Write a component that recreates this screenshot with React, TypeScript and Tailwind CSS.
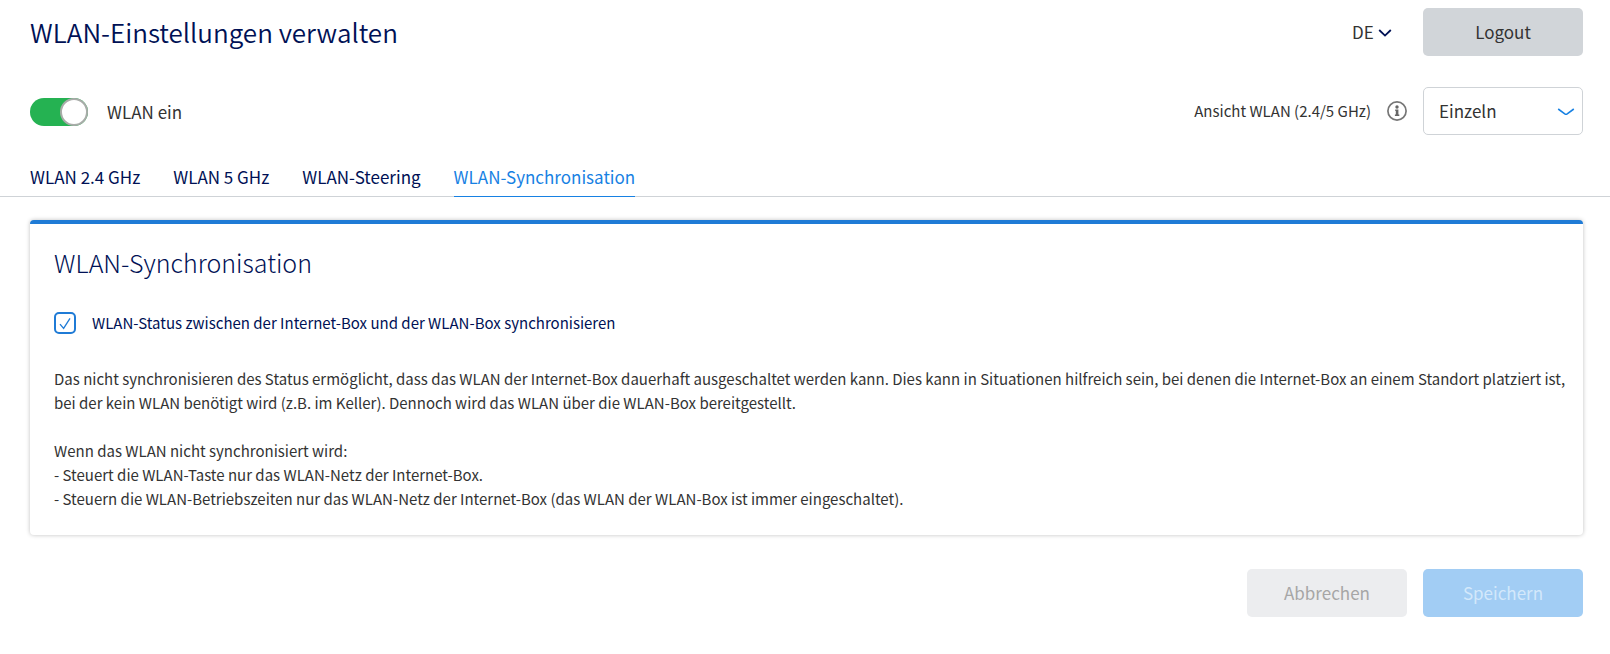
import { useState } from "react";

const tabs = ["WLAN 2.4 GHz", "WLAN 5 GHz", "WLAN-Steering", "WLAN-Synchronisation"];

function Chevron({ className }: { className: string }) {
  return (
    <svg viewBox="0 0 14 8" fill="none" stroke="currentColor" strokeWidth="1.8" className={className} aria-hidden="true">
      <path d="M1.2 1l5.8 5.6L12.8 1" />
    </svg>
  );
}

function InfoIcon() {
  return (
    <svg width="20" height="20" viewBox="0 0 20 20" fill="none" aria-hidden="true">
      <circle cx="10" cy="10" r="9.1" stroke="#767676" strokeWidth="1.7" />
      <circle cx="10" cy="6" r="1.7" fill="#666" />
      <path d="M8.2 8.6h3.2v5h.9v1.3H7.9v-1.3h.9V9.9h-.6z" fill="#666" />
    </svg>
  );
}

export default function App() {
  const [wlanOn, setWlanOn] = useState(true);
  const [active, setActive] = useState("WLAN-Synchronisation");
  const [sync, setSync] = useState(true);

  return (
    <main className="bg-white font-['Noto_Sans_CJK_SC','Noto_Sans',sans-serif] text-[#333333]">
      <header className="flex items-center justify-between pt-2 pr-[27px] pl-[30px]">
        <h1 className="text-[26px] leading-12 font-[350] text-[#001155]">WLAN-Einstellungen verwalten</h1>
        <div className="flex items-center gap-[31px]">
          <div className="relative">
            <select
              aria-label="Sprache"
              className="w-10 appearance-none bg-transparent text-[17px] leading-6 outline-none"
            >
              <option>DE</option>
              <option>FR</option>
              <option>IT</option>
              <option>EN</option>
            </select>
            <Chevron className="pointer-events-none absolute top-[9px] right-0 h-2 w-3.5 text-[#001155]" />
          </div>
          <button type="button" className="h-12 w-40 rounded-[5px] bg-[#d1d5d9] text-[17px] leading-6">
            Logout
          </button>
        </div>
      </header>

      <div className="mt-[31px] flex items-center justify-between pr-[27px] pl-[30px]">
        <label className="flex items-center gap-[19px] pt-0.5 text-[17px] leading-6">
          <span className="relative flex">
            <input
              type="checkbox"
              role="switch"
              checked={wlanOn}
              onChange={(e) => setWlanOn(e.target.checked)}
              className="peer h-7 w-[58px] appearance-none rounded-full bg-[#a0a0a0] checked:bg-[#25b252]"
            />
            <span className="pointer-events-none absolute top-0 left-0 size-7 rounded-full border-2 border-[#a9aca9] bg-white peer-checked:left-[30px]" />
          </span>
          WLAN ein
        </label>
        <div className="flex items-center gap-4">
          <label htmlFor="view" className="text-[15px] leading-6">
            Ansicht WLAN (2.4/5 GHz)
          </label>
          <button type="button" aria-label="Information">
            <InfoIcon />
          </button>
          <div className="relative">
            <select
              id="view"
              className="h-12 w-40 appearance-none rounded-[5px] border border-[#cfd3d7] bg-white pl-[15px] text-[17px] outline-none"
            >
              <option>Einzeln</option>
              <option>Kombiniert</option>
            </select>
            <svg
              width="18"
              height="8"
              viewBox="0 0 18 8"
              fill="none"
              className="pointer-events-none absolute top-[21px] right-2"
              aria-hidden="true"
            >
              <path d="M1.2 1l6.6 4.8q1.2.8 2.4 0L16.8 1" stroke="#1781e3" strokeWidth="1.6" />
            </svg>
          </div>
        </div>
      </div>

      <nav className="mt-[29px] flex gap-[33px] border-b border-[#cfd3d7] pl-[30px]">
        {tabs.map((tab) => (
          <button
            key={tab}
            type="button"
            aria-current={tab === active ? "page" : undefined}
            onClick={() => setActive(tab)}
            className={
              tab === active
                ? "-mb-px border-b border-[#1781e3] pb-1.5 text-[17px] leading-[26px] text-[#1781e3]"
                : "-mb-px border-b border-transparent pb-1.5 text-[17px] leading-[26px] text-[#001155]"
            }
          >
            {tab}
          </button>
        ))}
      </nav>

      <section className="mt-[23px] mr-[27px] ml-[30px] rounded-[4px] border-t-4 border-[#1f7bd6] bg-white pt-[22px] pr-4 pb-6 pl-6 shadow-[0_0_4px_rgba(0,0,0,0.25)]">
        <h2 className="text-[25px] leading-8 font-light text-[#001155]">WLAN-Synchronisation</h2>

        <label className="mt-[33px] flex items-center gap-4 text-[15px] leading-6 text-[#001155]">
          <span className="relative flex">
            <input
              type="checkbox"
              checked={sync}
              onChange={(e) => setSync(e.target.checked)}
              className="peer size-[22px] appearance-none rounded-[5px] border-2 border-[#1f7bd6] bg-white"
            />
            <svg
              viewBox="0 0 22 22"
              fill="none"
              className="pointer-events-none absolute inset-0 hidden size-[22px] peer-checked:block"
              aria-hidden="true"
            >
              <path d="M6 12.2l3.6 4.2L16 6.4" stroke="#1f7bd6" strokeWidth="1.3" />
            </svg>
          </span>
          WLAN-Status zwischen der Internet-Box und der WLAN-Box synchronisieren
        </label>

        <p className="mt-8 text-[15px] leading-6">
          Das nicht synchronisieren des Status ermöglicht, dass das WLAN der Internet-Box dauerhaft ausgeschaltet werden
          kann. Dies kann in Situationen hilfreich sein, bei denen die Internet-Box an einem Standort platziert ist, bei
          der kein WLAN benötigt wird (z.B. im Keller). Dennoch wird das WLAN über die WLAN-Box bereitgestellt.
        </p>
        <p className="mt-6 text-[15px] leading-6">
          Wenn das WLAN nicht synchronisiert wird:
          <br />- Steuert die WLAN-Taste nur das WLAN-Netz der Internet-Box.
          <br />- Steuern die WLAN-Betriebszeiten nur das WLAN-Netz der Internet-Box (das WLAN der WLAN-Box ist immer
          eingeschaltet).
        </p>
      </section>

      <div className="mt-[34px] flex justify-end gap-4 pr-[27px] pb-9">
        <button type="button" disabled className="h-12 w-40 rounded-[5px] bg-[#ecedef] text-[17px] leading-6 text-[#a6a6a6]">
          Abbrechen
        </button>
        <button type="button" disabled className="h-12 w-40 rounded-[5px] bg-[#a2cdf4] text-[17px] leading-6 text-[#d3e8fb]">
          Speichern
        </button>
      </div>
    </main>
  );
}
